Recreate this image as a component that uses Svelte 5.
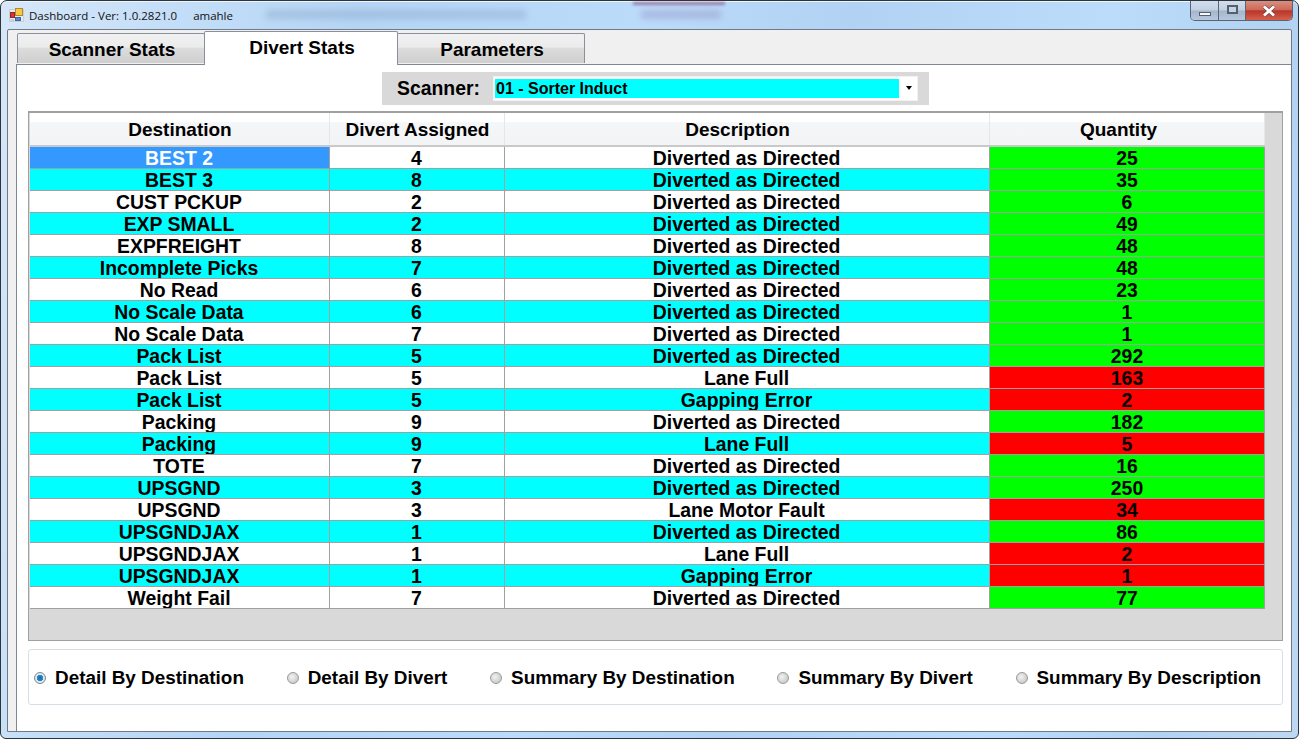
<script>
  const columns = ["Destination", "Divert Assigned", "Description", "Quantity"];
  const directed = "Diverted as Directed";
  const rows = [
    ["BEST 2", 4, directed, 25],
    ["BEST 3", 8, directed, 35],
    ["CUST PCKUP", 2, directed, 6],
    ["EXP SMALL", 2, directed, 49],
    ["EXPFREIGHT", 8, directed, 48],
    ["Incomplete Picks", 7, directed, 48],
    ["No Read", 6, directed, 23],
    ["No Scale Data", 6, directed, 1],
    ["No Scale Data", 7, directed, 1],
    ["Pack List", 5, directed, 292],
    ["Pack List", 5, "Lane Full", 163],
    ["Pack List", 5, "Gapping Error", 2],
    ["Packing", 9, directed, 182],
    ["Packing", 9, "Lane Full", 5],
    ["TOTE", 7, directed, 16],
    ["UPSGND", 3, directed, 250],
    ["UPSGND", 3, "Lane Motor Fault", 34],
    ["UPSGNDJAX", 1, directed, 86],
    ["UPSGNDJAX", 1, "Lane Full", 2],
    ["UPSGNDJAX", 1, "Gapping Error", 1],
    ["Weight Fail", 7, directed, 77]
  ];
  const tabs = ["Scanner Stats", "Divert Stats", "Parameters"];
  const views = [
    "Detail By Destination",
    "Detail By Divert",
    "Summary By Destination",
    "Summary By Divert",
    "Summary By Description"
  ];
  let activeTab = 1;
  let activeView = views[0];
</script>

<div class="window">
  <div class="titlebar">
    <!-- whatever sits behind the glass, blurred -->
    <div class="ghost g1"></div>
    <div class="ghost g2"></div>
    <div class="ghost g3"></div>
    <svg class="appicon" viewBox="0 0 16 16" width="16" height="16">
      <rect x="0.500" y="2.500" width="14" height="12" fill="#e9ebee" stroke="#c9ced4" />
      <rect x="6.500" y="1.500" width="7" height="7" fill="#f7c93e" stroke="#b8862a" />
      <rect x="1.500" y="5.500" width="4" height="5" fill="#e0332a" stroke="#8a2a2a" />
      <rect x="6.500" y="10.500" width="5" height="3" fill="#4f8ade" stroke="#41669c" />
      <rect x="1.500" y="12" width="3.500" height="2" fill="#c4ccd6" />
    </svg>
    <span class="title">Dashboard - Ver: 1.0.2821.0</span>
    <span class="user">amahle</span>
    <div class="winbtns">
      <div class="wb"><span class="min"></span></div>
      <div class="wb mid"><span class="max"></span></div>
      <div class="wb close">
        <svg viewBox="0 0 16 12" width="16" height="12">
          <path d="M3 1.500 L13 10.500 M13 1.500 L3 10.500" stroke="#6e4a50" stroke-width="4.200" />
          <path d="M3 1.500 L13 10.500 M13 1.500 L3 10.500" stroke="#fff" stroke-width="2.800" />
        </svg>
      </div>
    </div>
  </div>

  <div class="client">
    <div class="tabstrip">
      {#each tabs as t, i}
        <button class="tab" class:active={i === activeTab} onclick={() => (activeTab = i)}>{t}</button>
      {/each}
    </div>

    <div class="page">
      <div class="scanner">
        <span class="scanlabel">Scanner:</span>
        <div class="combo">
          <span class="comboval">01 - Sorter Induct</span>
          <span class="arrow"></span>
        </div>
      </div>

      <div class="grid">
        <div class="table">
          <div class="row head">
            {#each columns as c}
              <div class="cell">{c}</div>
            {/each}
          </div>
          {#each rows as r, i}
            <div class="row" class:alt={i % 2 === 1}>
              <div class="cell" class:selected={i === 0}>{r[0]}</div>
              <div class="cell">{r[1]}</div>
              <div class="cell">{r[2]}</div>
              <div class="cell" class:good={r[2] === directed} class:bad={r[2] !== directed}>{r[3]}</div>
            </div>
          {/each}
        </div>
      </div>

      <div class="views">
        {#each views as v}
          <label class="view">
            <input type="radio" name="view" value={v} bind:group={activeView} />
            <span class="dot"></span>
            <span>{v}</span>
          </label>
        {/each}
      </div>
    </div>
  </div>
</div>

<style>
  :global(body) {
    margin: 0;
    background: #fff;
    overflow: hidden;
  }

  .window {
    width: 1299px;
    height: 739px;
    box-sizing: border-box;
    padding: 0 6px 6px 6px;
    display: flex;
    flex-direction: column;
    border: 1px solid #2c343c;
    border-radius: 7px 7px 6px 6px;
    box-shadow: inset 0 1px 0 #eef5fc;
    background:
      linear-gradient(100deg, #d6e7f8 0, #c4def8 12%, #b5d5f5 25%, #bbdbfb 45%, #b2d2f3 60%, #bcdcfc 78%, #b2d2f2 90%, #bcd8f4 100%);
    font-family: "Liberation Sans", Arial, sans-serif;
    color: #000;
  }

  .titlebar {
    height: 28px;
    flex: none;
    display: flex;
    align-items: center;
    font-size: 11.500px;
    font-family: "Open Sans", "Liberation Sans", sans-serif;
    color: #111;
    margin-left: -6px;
    margin-right: -6px;
    padding-left: 8px;
    position: relative;
    overflow: hidden;
  }

  .ghost {
    position: absolute;
    filter: blur(3px);
    opacity: 0.35;
  }

  .g1 {
    left: 265px;
    top: 9px;
    width: 260px;
    height: 9px;
    background: #7f98bc;
  }

  .g2 {
    left: 640px;
    top: 9px;
    width: 80px;
    height: 9px;
    background: #8a7fb0;
  }

  .g3 {
    left: 632px;
    top: 1px;
    width: 92px;
    height: 3px;
    background: #94608c;
    filter: blur(1.500px);
    opacity: 0.8;
  }

  .appicon {
    margin-right: 4px;
    position: relative;
  }

  .title {
    margin-right: 16px;
    position: relative;
  }

  .user {
    position: relative;
  }

  .winbtns {
    margin-left: auto;
    align-self: flex-start;
    margin-right: 5px;
    position: relative;
    display: flex;
    height: 19px;
    border: 1px solid #5a6472;
    border-top: none;
    border-radius: 0 0 5px 5px;
    overflow: hidden;
  }

  .wb {
    width: 27px;
    display: flex;
    align-items: center;
    justify-content: center;
    background: linear-gradient(180deg, #d2deec 0, #c2d0e2 48%, #a4b6cc 52%, #b6c8dc 100%);
    border-right: 1px solid #5a6472;
  }

  .wb.mid {
    width: 26px;
  }

  .min {
    width: 10px;
    height: 2px;
    margin-top: 6px;
    background: #f4f8fc;
    border: 1px solid #56606c;
  }

  .max {
    width: 7px;
    height: 5px;
    margin-bottom: 2px;
    background: #c4d4e6;
    border: 2px solid #56606c;
  }

  .close {
    width: 46px;
    border-right: none;
    background: linear-gradient(180deg, #db8e80 0, #cd6a58 45%, #b8362a 52%, #d6604c 100%);
  }

  .client {
    flex: 1;
    min-height: 0;
    display: flex;
    flex-direction: column;
    background: #f0f0f0;
    border: 1px solid #6f7a86;
    border-radius: 2px 2px 0 0;
    padding-left: 8px;
  }

  .tabstrip {
    height: 34px;
    flex: none;
    display: flex;
    align-items: flex-end;
    padding-left: 1px;
    position: relative;
    z-index: 1;
  }

  .tab {
    width: 188px;
    height: 30px;
    margin: 0 0 1px;
    padding: 3px 0 0 2px;
    box-sizing: border-box;
    border: 1px solid #8a9099;
    border-bottom: none;
    border-radius: 2px 2px 0 0;
    background: linear-gradient(180deg, #f1f1f1 0, #ebebeb 45%, #dcdcdc 50%, #cfcfcf 100%);
    font: bold 19px "Liberation Sans", Arial, sans-serif;
    color: #000;
  }

  .tab.active {
    width: 194px;
    height: 34px;
    margin: 0 -1px -1px;
    padding: 0 0 1px 2px;
    background: #fff;
    position: relative;
    z-index: 2;
  }

  .page {
    flex: 1;
    min-height: 0;
    box-sizing: border-box;
    background: #fff;
    border-top: 1px solid #7f8892;
    border-left: 1px solid #7f8892;
    padding: 7px 8px 0 11px;
    display: flex;
    flex-direction: column;
  }

  .scanner {
    align-self: flex-start;
    margin-left: 354px;
    width: 547px;
    height: 33px;
    box-sizing: border-box;
    background: #d9d9d9;
    display: flex;
    align-items: center;
    padding: 0 11px 0 15px;
  }

  .scanlabel {
    font-size: 19.400px;
    font-weight: bold;
    width: 96px;
    flex: none;
  }

  .combo {
    flex: 1;
    height: 25px;
    box-sizing: border-box;
    background: #fff;
    border: 1px solid #f2f2f2;
    padding: 2px 0 2px 1px;
    display: flex;
    align-items: center;
    margin-top: -1px;
  }

  .comboval {
    width: 404px;
    height: 100%;
    background: #00ffff;
    font-size: 16px;
    font-weight: bold;
    line-height: 19px;
    padding-left: 1px;
    box-sizing: border-box;
  }

  .arrow {
    margin-left: 7px;
    width: 0;
    height: 0;
    border: 3.500px solid transparent;
    border-top: 4px solid #000;
    border-bottom: none;
  }

  .grid {
    margin-top: 6px;
    height: 530px;
    flex: none;
    box-sizing: border-box;
    background: #d9d9d9;
    border: 1px solid #a0a0a0;
    border-top-width: 2px;
    padding-left: 1px;
  }

  .table {
    width: 1235px;
  }

  .row {
    display: grid;
    grid-template-columns: 300px 175px 485px 275px;
    height: 22px;
    background: #fff;
    font-size: 19.400px;
    font-weight: bold;
    line-height: 22px;
    text-align: center;
    box-sizing: border-box;
    border-bottom: 1px solid #a0a0a0;
  }

  .row.alt {
    background: #00ffff;
  }

  .row.head {
    height: 34px;
    border-bottom: 2px solid #c9c9c9;
    font-size: 19px;
    line-height: 33px;
    background: linear-gradient(180deg, #fff 0, #fff 28%, #f5f6f8 30%, #f3f4f6 100%);
  }

  .cell {
    overflow: hidden;
    height: 100%;
    padding-right: 1px;
    border-right: 1px solid #a0a0a0;
    box-sizing: border-box;
    white-space: nowrap;
  }

  .row.head .cell {
    border-right: 1px solid #e4e6e9;
    padding-right: 0;
  }

  .row.head .cell:nth-child(-n + 2) {
    padding-left: 1px;
  }

  .row.head .cell:nth-child(3) {
    padding-right: 19px;
  }

  .row.head .cell:nth-child(4) {
    padding-right: 17px;
  }

  .cell.selected {
    background: #3399ff;
    color: #fff;
  }

  .cell.good {
    background: #00ff00;
    padding-right: 0;
  }

  .cell.bad {
    background: #ff0000;
    padding-right: 0;
  }

  .views {
    margin-top: 8px;
    height: 56px;
    box-sizing: border-box;
    flex: none;
    border: 1px solid #d5dfe5;
    border-radius: 3px;
    display: flex;
    align-items: center;
    gap: 42.750px;
    padding: 2px 0 0 5px;
    font-size: 18.900px;
    font-weight: bold;
  }

  .view {
    display: flex;
    align-items: center;
    gap: 9px;
  }

  .view input {
    display: none;
  }

  .dot {
    width: 12px;
    height: 12px;
    box-sizing: border-box;
    border-radius: 50%;
    border: 1px solid #9a9a9a;
    background: radial-gradient(circle at 40% 40%, #f2f2f2, #bdbdbd);
    margin-top: -1px;
  }

  .view input:checked + .dot {
    border-color: #7f8a94;
    background: radial-gradient(circle, #0f6cb0 0, #2a8ad0 42%, #e4eaee 50%, #cfd6dc 100%);
  }
</style>
